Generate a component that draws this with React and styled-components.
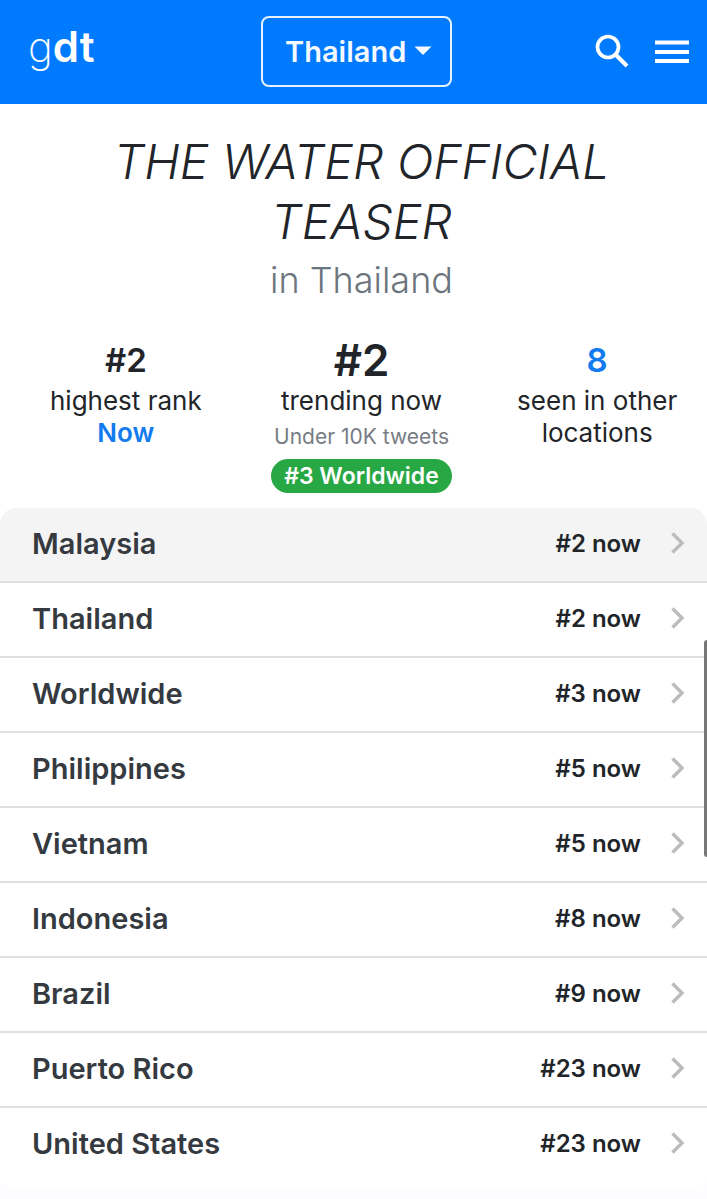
import React, { useState } from 'react';
import styled, { createGlobalStyle } from 'styled-components';

const GlobalStyle = createGlobalStyle`
  * {
    box-sizing: border-box;
  }
  body {
    margin: 0;
    background: #fdfdff;
    color: #212529;
    font-family: Inter, 'Liberation Sans', sans-serif;
  }
  a {
    color: inherit;
    text-decoration: none;
  }
`;

const Page = styled.div`
  position: relative;
  overflow-x: hidden;
`;

const Header = styled.header`
  display: grid;
  grid-template-columns: 1fr auto 1fr;
  align-items: center;
  height: 104px;
  padding: 0 18px 2px 24px;
  background: #007bff;
  color: #fff;
`;

const Logo = styled.a`
  padding: 0 0 8px 4px;
  font-size: 42px;
  font-weight: 200;
  line-height: 48px;

  b {
    font-weight: 600;
  }
`;

const Picker = styled.div`
  display: grid;
  align-items: center;

  select,
  svg {
    grid-area: 1 / 1;
  }
  svg {
    justify-self: end;
    margin-right: 20px;
    pointer-events: none;
  }
`;

const Select = styled.select`
  appearance: none;
  width: 191px;
  height: 71px;
  padding: 0 22px;
  border: 2px solid #e6f2ff;
  border-radius: 8px;
  background: transparent;
  color: #f3f9ff;
  font-family: inherit;
  font-size: 29px;
  font-weight: 600;

  option {
    color: #212529;
  }
`;

const Actions = styled.div`
  display: flex;
  justify-content: flex-end;
  gap: 26px;
`;

const IconButton = styled.button`
  display: flex;
  padding: 0;
  border: 0;
  background: none;
  color: #fff;
  cursor: pointer;
`;

const Main = styled.main`
  background: #fff;
  border-radius: 0 0 16px 16px;
  padding-bottom: 6px;
`;

const Heading = styled.div`
  padding: 28px 64px 0 80px;
  text-align: center;
`;

const Title = styled.h1`
  margin: 0;
  font-size: 48px;
  font-style: italic;
  font-weight: 300;
  line-height: 60px;
`;

const Place = styled.p`
  margin: 4px 0 0;
  color: #6c757d;
  font-size: 36px;
  font-weight: 300;
  line-height: 48px;
`;

const Stats = styled.section`
  display: grid;
  grid-template-columns: repeat(3, 1fr);
  gap: 16px;
  padding: 31px 0 15px 16px;
  text-align: center;
`;

const Stat = styled.div`
  display: flex;
  flex-direction: column;
  align-items: center;
`;

const Figure = styled.strong`
  font-size: ${props => (props.$big ? 44 : 33)}px;
  font-weight: 600;
  line-height: 50px;
  color: ${props => (props.$link ? '#127bef' : 'inherit')};
`;

const Label = styled.span`
  font-size: 26px;
  line-height: 32px;
`;

const Since = styled.a`
  && {
    color: #127bef;
  }
  font-size: 26px;
  font-weight: 600;
  line-height: 32px;
`;

const Volume = styled.span`
  color: #777c84;
  font-size: 21px;
  line-height: 40px;
`;

const Badge = styled.span`
  margin-top: 2px;
  padding: 0 13px;
  border-radius: 17px;
  background: #28a745;
  color: #fff;
  font-size: 23px;
  font-weight: 600;
  line-height: 34px;
`;

const List = styled.ul`
  margin: 0;
  padding: 0;
  list-style: none;
  border-radius: 16px 16px 0 0;
  overflow: hidden;
`;

const Item = styled.li`
  border-bottom: 2px solid #dee0e4;
  background: ${props => (props.$active ? '#f4f4f5' : '#fff')};

  &:last-child {
    border-color: transparent;
  }
`;

const Row = styled.a`
  display: flex;
  align-items: center;
  height: 73px;
  padding: 0 22px 3px 32px;
`;

const Name = styled.span`
  flex: 1;
  color: #343a40;
  font-size: 29px;
  font-weight: 600;
`;

const Rank = styled.span`
  margin-right: 30px;
  font-size: 24px;
  font-weight: 600;
`;

const ScrollThumb = styled.div`
  position: absolute;
  top: 640px;
  right: 0;
  width: 3px;
  height: 217px;
  border-radius: 3px 0 0 3px;
  background: #777;
`;

const SearchIcon = () => (
  <svg width="34" height="34" viewBox="0 0 34 34" fill="none" stroke="currentColor" strokeWidth="3.7">
    <circle cx="13" cy="13" r="10.5" />
    <path d="M20.500 20.500 32 32" strokeWidth="4" />
  </svg>
);

const MenuIcon = () => (
  <svg width="34" height="34" viewBox="0 0 34 34" fill="currentColor">
    <path d="M0 6.500h34v4H0zM0 16h34v4H0zM0 25h34v4H0z" />
  </svg>
);

const Caret = () => (
  <svg width="18" height="10" viewBox="0 0 18 10" fill="#f3f9ff">
    <path d="M0.500 0.500h17L9 9z" />
  </svg>
);

const Chevron = () => (
  <svg width="14" height="22" viewBox="0 0 14 22" fill="none" stroke="#bcbcbd" strokeWidth="3.4">
    <path d="M1.500 1.500 11 11 1.500 20.500" />
  </svg>
);

const locations = [
  { name: 'Malaysia', rank: 2 },
  { name: 'Thailand', rank: 2 },
  { name: 'Worldwide', rank: 3 },
  { name: 'Philippines', rank: 5 },
  { name: 'Vietnam', rank: 5 },
  { name: 'Indonesia', rank: 8 },
  { name: 'Brazil', rank: 9 },
  { name: 'Puerto Rico', rank: 23 },
  { name: 'United States', rank: 23 },
];

const App = () => {
  const [country, setCountry] = useState('Thailand');

  return (
    <Page>
      <GlobalStyle />
      <Header>
        <Logo href="#">g<b>dt</b></Logo>
        <Picker>
          <Select aria-label="Location" value={country} onChange={e => setCountry(e.target.value)}>
            {locations.map(l => <option key={l.name}>{l.name}</option>)}
          </Select>
          <Caret />
        </Picker>
        <Actions>
          <IconButton aria-label="Search"><SearchIcon /></IconButton>
          <IconButton aria-label="Menu"><MenuIcon /></IconButton>
        </Actions>
      </Header>

      <Main>
        <Heading>
          <Title>THE WATER OFFICIAL TEASER</Title>
          <Place>in {country}</Place>
        </Heading>

        <Stats>
          <Stat>
            <Figure>#2</Figure>
            <Label>highest rank</Label>
            <Since href="#">Now</Since>
          </Stat>
          <Stat>
            <Figure $big>#2</Figure>
            <Label>trending now</Label>
            <Volume>Under 10K tweets</Volume>
            <Badge>#3 Worldwide</Badge>
          </Stat>
          <Stat>
            <Figure $link>8</Figure>
            <Label>seen in other locations</Label>
          </Stat>
        </Stats>

        <List>
          {locations.map((l, i) => (
            <Item key={l.name} $active={i === 0}>
              <Row href="#">
                <Name>{l.name}</Name>
                <Rank>#{l.rank} now</Rank>
                <Chevron />
              </Row>
            </Item>
          ))}
        </List>
      </Main>
      <ScrollThumb />
    </Page>
  );
};

export default App;
